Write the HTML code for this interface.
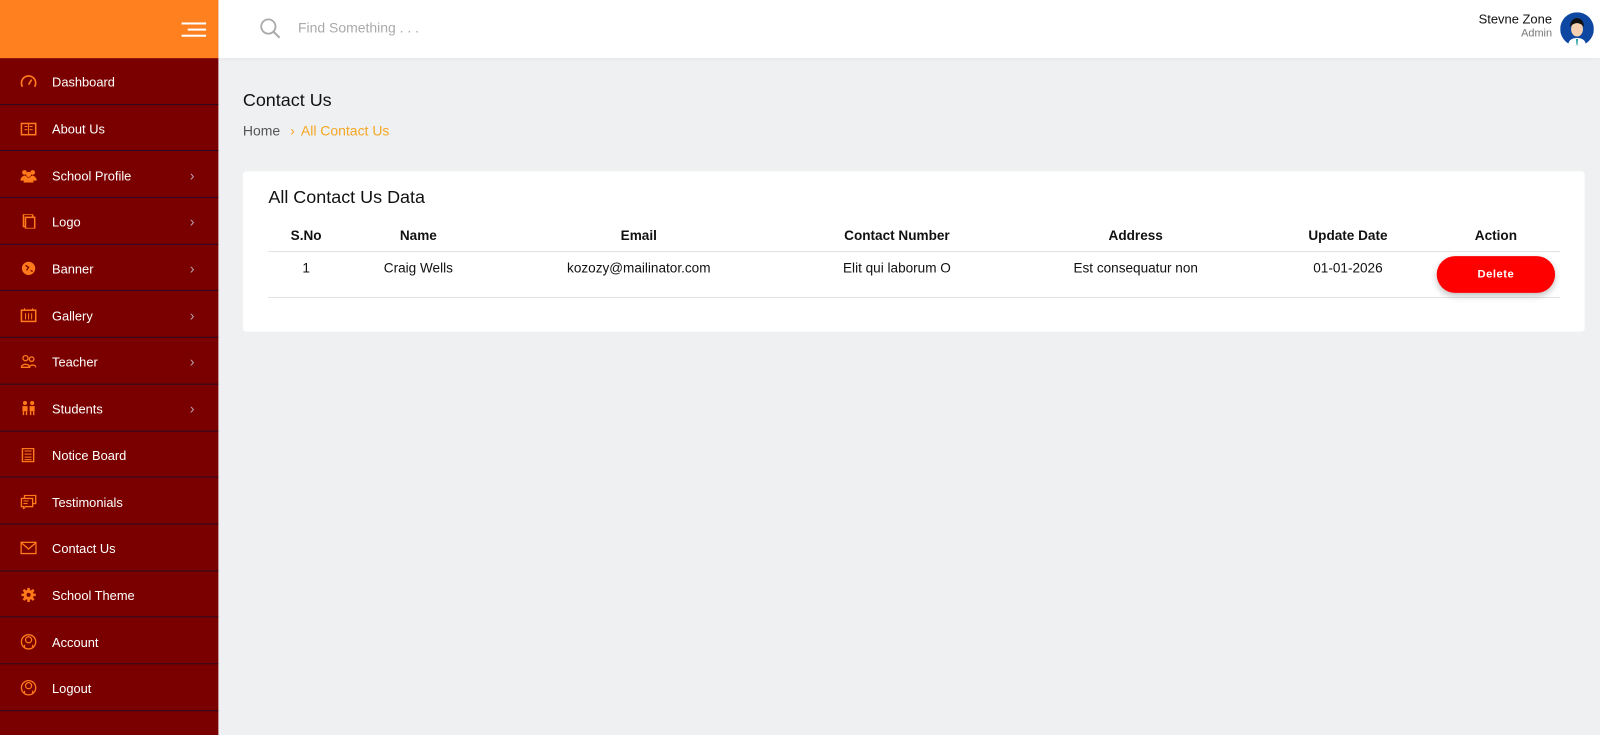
<!DOCTYPE html>
<html><head><meta charset="utf-8"><style>
*{margin:0;padding:0;box-sizing:border-box}
html,body{width:1600px;height:735px;overflow:hidden;background:#eff0f2;font-family:"Liberation Sans",Arial,sans-serif}
#root{position:relative;width:1568px;height:720px;transform:scale(1.0204);transform-origin:0 0}
.side{position:absolute;left:0;top:0;width:214px;height:735px;background:#7a0000}
.logo{height:57px;background:#fe801f;position:relative}
.ham{position:absolute;height:2px;background:#fff}
.item{height:45.7px;border-bottom:1.5px solid #2c0b22;position:relative;color:#fff;font-size:12.6px}
.item span.t{position:absolute;left:51px;top:calc(50% + 2px);transform:translateY(-50%)}
.item .ic{position:absolute;left:20px;top:calc(50% + 1px);transform:translateY(-50%);width:16px;height:14px}
.item .ar{position:absolute;left:186px;top:calc(50% + 1px);transform:translateY(-50%);color:#b9a0b0;font-size:14px}
.top{position:absolute;left:214px;top:0;right:0;height:57px;background:#fff;box-shadow:0 1px 3px rgba(0,0,0,.08)}
.abs{position:absolute}
.card{position:absolute;left:238px;top:168px;width:1315px;height:157px;background:#fff;border-radius:3px}
th,td{position:absolute;transform:translateX(-50%);font-size:13.3px;white-space:nowrap;color:#111}
</style></head><body><div id="root">
<div class="side">
 <div class="logo"><div class="ham" style="top:22px;width:24px;left:178px"></div><div class="ham" style="top:28px;width:18px;left:184px"></div><div class="ham" style="top:34px;width:24px;left:178px"></div></div>
 <div class="item"><svg class="ic" viewBox="0 0 16 14"><path d="M2 12A7 7 0 1 1 14 12" fill="none" stroke="#ff7a1a" stroke-width="1.6"/><path d="M8 10L11 5" stroke="#ff7a1a" stroke-width="1.6"/></svg><span class="t">Dashboard</span></div>
 <div class="item"><svg class="ic" viewBox="0 0 16 14"><rect x="1" y="2" width="14" height="11" fill="none" stroke="#ff7a1a" stroke-width="1.5"/><path d="M4 5h3M4 8h3M9 5h3M9 8h3M8 2v11" stroke="#ff7a1a"/></svg><span class="t">About Us</span></div>
 <div class="item"><svg class="ic" viewBox="0 0 16 14"><circle cx="4" cy="4" r="2.3" fill="#ff7a1a"/><circle cx="12" cy="4" r="2.3" fill="#ff7a1a"/><circle cx="8" cy="6" r="2.5" fill="#ff7a1a"/><path d="M0 12c0-4 4-5 4-5s4 1 4 5zM8 12c0-4 4-5 4-5s4 1 4 5zM3 14c0-4 5-5 5-5s5 1 5 5z" fill="#ff7a1a"/></svg><span class="t">School Profile</span><span class="ar">›</span></div>
 <div class="item"><svg class="ic" viewBox="0 0 16 14"><rect x="3" y="0" width="9" height="12" fill="none" stroke="#ff7a1a" stroke-width="1.5"/><rect x="5" y="3" width="9" height="11" fill="#7a0000" stroke="#ff7a1a" stroke-width="1.5"/></svg><span class="t">Logo</span><span class="ar">›</span></div>
 <div class="item"><svg class="ic" viewBox="0 0 16 14"><circle cx="8" cy="7" r="6.5" fill="#ff7a1a"/><path d="M5 4l3 2-2 3M10 9l2 1" stroke="#7a0000" stroke-width="1.3" fill="none"/></svg><span class="t">Banner</span><span class="ar">›</span></div>
 <div class="item"><svg class="ic" viewBox="0 0 16 14"><rect x="1" y="2" width="14" height="11" fill="none" stroke="#ff7a1a" stroke-width="1.5"/><path d="M4 2V0M12 2V0M5 5v6M8 5v6M11 5v6" stroke="#ff7a1a"/></svg><span class="t">Gallery</span><span class="ar">›</span></div>
 <div class="item"><svg class="ic" viewBox="0 0 16 14"><circle cx="5" cy="4" r="2.5" fill="none" stroke="#ff7a1a" stroke-width="1.3"/><circle cx="11" cy="5" r="2.2" fill="none" stroke="#ff7a1a" stroke-width="1.3"/><path d="M1 13c0-4 8-4 8 0zM9 13c0-3 6-3 6 0" fill="none" stroke="#ff7a1a" stroke-width="1.3"/></svg><span class="t">Teacher</span><span class="ar">›</span></div>
 <div class="item"><svg class="ic" viewBox="0 0 16 14"><circle cx="4.5" cy="2" r="2" fill="#ff7a1a"/><circle cx="11.5" cy="2" r="2" fill="#ff7a1a"/><rect x="2" y="5" width="5" height="5" fill="#ff7a1a"/><rect x="9" y="5" width="5" height="5" fill="#ff7a1a"/><path d="M3 10v4M6 10v4M10 10v4M13 10v4" stroke="#ff7a1a" stroke-width="1.4"/></svg><span class="t">Students</span><span class="ar">›</span></div>
 <div class="item"><svg class="ic" viewBox="0 0 16 14"><rect x="2" y="0.5" width="11" height="13" fill="none" stroke="#ff7a1a" stroke-width="1.4"/><path d="M4 3h7M4 6h7M4 9h7M4 11.5h7" stroke="#ff7a1a"/></svg><span class="t">Notice Board</span></div>
 <div class="item"><svg class="ic" viewBox="0 0 16 14"><rect x="4" y="0.5" width="11" height="8" fill="none" stroke="#ff7a1a" stroke-width="1.3"/><rect x="1" y="3.5" width="11" height="8" fill="#7a0000" stroke="#ff7a1a" stroke-width="1.3"/><path d="M3 11.5v2.5l2-2.5M3 6h5M3 8.5h4" stroke="#ff7a1a"/></svg><span class="t">Testimonials</span></div>
 <div class="item"><svg class="ic" viewBox="0 0 16 14"><rect x="0.7" y="1.5" width="14.6" height="11" fill="none" stroke="#ff7a1a" stroke-width="1.3"/><path d="M1 2l7 6 7-6" fill="none" stroke="#ff7a1a" stroke-width="1.3"/></svg><span class="t">Contact Us</span></div>
 <div class="item"><svg class="ic" viewBox="0 0 16 14"><circle cx="8" cy="7" r="5" fill="#ff7a1a"/><path d="M8 0v14M1 7h14M3 2l10 10M13 2L3 12" stroke="#ff7a1a" stroke-width="2.5"/><circle cx="8" cy="7" r="2" fill="#7a0000"/></svg><span class="t">School Theme</span></div>
 <div class="item"><svg class="ic" viewBox="0 0 16 16" style="height:16px"><circle cx="8" cy="8" r="7" fill="none" stroke="#ff7a1a" stroke-width="1.3"/><circle cx="8" cy="6" r="3" fill="none" stroke="#ff7a1a" stroke-width="1.2"/><path d="M4 14V11M12 14V11" stroke="#ff7a1a" stroke-width="1.2"/></svg><span class="t">Account</span></div>
 <div class="item"><svg class="ic" viewBox="0 0 16 16" style="height:16px"><circle cx="8" cy="8" r="7" fill="none" stroke="#ff7a1a" stroke-width="1.3"/><circle cx="8" cy="6" r="3" fill="none" stroke="#ff7a1a" stroke-width="1.2"/><path d="M4 14V11M12 14V11" stroke="#ff7a1a" stroke-width="1.2"/></svg><span class="t">Logout</span></div>
</div>
<div class="top">
 <svg class="abs" style="left:40px;top:17px" width="22" height="22" viewBox="0 0 22 22"><circle cx="9" cy="9" r="7" fill="none" stroke="#aaa" stroke-width="1.8"/><path d="M14 14l6 6" stroke="#aaa" stroke-width="2"/></svg>
 <div class="abs" style="left:78px;top:20px;font-size:13.7px;color:#aaa">Find Something . . .</div>
 <div class="abs" style="right:47px;top:12px;font-size:12.7px;color:#111;text-align:right">Stevne Zone</div>
 <div class="abs" style="right:47px;top:27px;font-size:10.7px;color:#777;text-align:right">Admin</div>
 <svg class="abs" style="right:6px;top:12px" width="33" height="33" viewBox="0 0 34 34"><circle cx="17" cy="17" r="17" fill="#0d47a1"/><path d="M8 34c0-6 4-8 9-8s9 2 9 8z" fill="#fff"/><path d="M16 27h2l-0.5 6h-1z" fill="#1a9c9c"/><ellipse cx="17" cy="17" rx="6" ry="7.5" fill="#f5d0b0"/><path d="M10 15c0-7 4-9 7-9s7 2 7 9c-2-3-5-4-7-4s-5 1-7 4z" fill="#111"/></svg>
</div>
<div class="abs" style="left:238px;top:88px;font-size:17.6px;color:#111">Contact Us</div>
<div class="abs" style="left:238px;top:121px;font-size:13.7px;color:#555">Home <span style="color:#f5a623;margin:0 6px">›</span><span style="color:#f5a623">All Contact Us</span></div>
<div class="card">
 <div class="abs" style="left:25px;top:15px;font-size:17.6px;color:#111">All Contact Us Data</div>
 <div class="abs" style="left:25px;top:78px;width:1266px;height:1px;background:#e2e2e2"></div>
 <div class="abs" style="left:25px;top:123px;width:1266px;height:1px;background:#e2e2e2"></div>
 <table><tr>
 <th style="left:62px;top:55px">S.No</th><th style="left:172px;top:55px">Name</th><th style="left:388px;top:55px">Email</th><th style="left:641px;top:55px">Contact Number</th><th style="left:875px;top:55px">Address</th><th style="left:1083px;top:55px">Update Date</th><th style="left:1228px;top:55px">Action</th></tr>
 <tr><td style="left:62px;top:87px">1</td><td style="left:172px;top:87px">Craig Wells</td><td style="left:388px;top:87px">kozozy@mailinator.com</td><td style="left:641px;top:87px">Elit qui laborum O</td><td style="left:875px;top:87px">Est consequatur non</td><td style="left:1083px;top:87px">01-01-2026</td></tr></table>
 <div class="abs" style="left:1170px;top:83px;width:116px;height:36px;border-radius:18px;background:#ff0000;color:#fff;font-size:11px;font-weight:bold;letter-spacing:.5px;text-align:center;line-height:36px;box-shadow:0 3px 6px rgba(0,0,0,.25)">Delete</div>
</div>
</div></body></html>
